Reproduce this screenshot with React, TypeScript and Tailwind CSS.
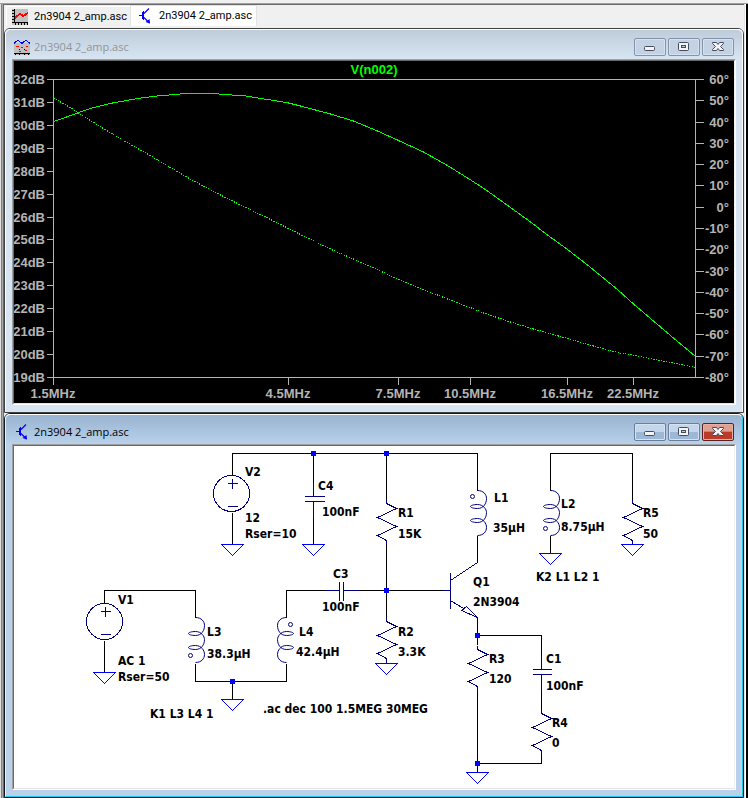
import React from "react";

const TITLE = "2n3904 2_amp.asc";

function TransistorIcon() {
  return (
    <svg viewBox="0 0 16 16" className="size-4 shrink-0" aria-hidden="true">
      <g fill="none" stroke="#0000ff">
        <path d="M2 7.5H6M5.5 4V11M6.5 3V12" shapeRendering="crispEdges" />
        <path d="M7 5.5L12 0.5M7 9.5L12.5 15" strokeWidth="1.2" />
      </g>
      <path d="M8.5 14L13 15.5L12.5 11Z" fill="#0000ff" />
    </svg>
  );
}

function PlotTabIcon() {
  return (
    <svg viewBox="0 0 16 16" className="size-4 shrink-0" aria-hidden="true" shapeRendering="crispEdges">
      <rect width="16" height="16" fill="#c0c0c0" />
      <path d="M2.5 0V14M2 13.5H16M0 1.5H2M0 4.5H2M0 7.5H2M0 10.5H2M0 13.5H2M3.5 14V16M6.5 14V16M9.5 14V16M12.5 14V16M15.5 14V16" stroke="#000" fill="none" />
      <path d="M3 9L8 4.5L11 7L16 4" stroke="#ff0000" strokeWidth="1.8" fill="none" />
    </svg>
  );
}

function PlotWindowIcon() {
  return (
    <svg viewBox="0 0 16 16" className="size-4 shrink-0" aria-hidden="true" shapeRendering="crispEdges">
      <rect y="4" width="16" height="12" fill="#c0c0c0" />
      <path d="M0 4.5L4 1L8 4.5L12 1L16 4.5" stroke="#0000ff" fill="none" />
      <path d="M2 7.5H5M7 8.5H9M12 7.5H14M5 12.5H7M11 11.5H13" stroke="#ff0000" fill="none" />
      <path d="M0 14.5H16M1.5 14V16M5.5 14V16M10.5 14V16M14.5 14V16M5 10.5H6M10 10.5H11" stroke="#000" fill="none" />
    </svg>
  );
}

const glyph = { fill: "#f4f4f4", stroke: "#454a60" };

function CaptionGlyph({ kind }: { kind: "Minimize" | "Maximize" | "Close" }) {
  return (
    <svg viewBox="0 0 12 12" className="size-3 shrink-0" aria-hidden="true">
      {kind === "Minimize" && <rect x="0.5" y="5.5" width="10" height="4" rx="1" {...glyph} />}
      {kind === "Maximize" && (
        <>
          <rect x="0.5" y="1.5" width="10" height="8" rx="1" {...glyph} />
          <rect x="3.5" y="4.5" width="4" height="2" fill="#b9cbdf" stroke="#454a60" />
        </>
      )}
      {kind === "Close" && (
        <path d="M0.5 1.5H4.5L6 3.5L7.5 1.5H11.5V2.5L8.5 5.5L11.5 8.5V9.5H7.5L6 7.5L4.5 9.5H0.5V8.5L3.5 5.5L0.5 2.5Z" {...glyph} />
      )}
    </svg>
  );
}

function CaptionButtons({ active }: { active: boolean }) {
  const idle = active
    ? "border-[#6b7f9c] bg-linear-to-b from-[#c3d6eb] from-50% to-[#9db8d6] to-50%"
    : "border-[#8592ae] bg-[#c4d3e3]";
  const close = active
    ? "border-[#5c1f22] bg-linear-to-b from-[#e0a090] from-45% to-[#b83c28] to-50%"
    : idle;
  return (
    <div className="flex gap-0.5">
      {(["Minimize", "Maximize", "Close"] as const).map((kind) => (
        <button
          key={kind}
          aria-label={kind}
          className={`flex h-[18px] w-8 items-center justify-center rounded-xs border ${
            kind === "Close" ? close : idle
          } ${kind === "Close" && active ? "shadow-[inset_0_0_0_1px_#e8b0a4]" : "shadow-[inset_0_0_0_1px_#d6e2ef]"}`}
        >
          <CaptionGlyph kind={kind} />
        </button>
      ))}
    </div>
  );
}

function MdiWindow({ active, icon, children }: { active: boolean; icon: React.ReactNode; children: React.ReactNode }) {
  return (
    <section className={`rounded-t-md border ${active ? "border-[#101820]" : "border-[#404040]"}`}>
      <div
        className={`rounded-t-[5px] border pb-1.5 ${
          active
            ? "border-t-white border-r-[#20c8e8] border-b-[#20c8e8] border-l-[#e8f1fa] bg-[#b9d1ea]"
            : "border-t-white border-r-white border-b-[#d7e4f2] border-l-white bg-[#d7e4f2]"
        }`}
      >
        <header
          className={`flex h-[29px] items-start justify-between rounded-t-[5px] bg-linear-to-b px-2 pt-2 ${
            active ? "from-[#99b4d1] to-[#b9d1ea] text-black" : "from-[#bfcddb] to-[#d7e4f2] text-[#8f9499]"
          }`}
        >
          <div className="flex h-[18px] items-center gap-1">
            {icon}
            <h2 className="font-['Open_Sans',sans-serif] text-[11px] leading-4">{TITLE}</h2>
          </div>
          <CaptionButtons active={active} />
        </header>
        <div className="mx-1.5 border border-t-[#a0a0a0] border-r-white border-b-white border-l-[#a0a0a0]">
          <div className="border border-t-[#696969] border-r-[#f0f0f0] border-b-[#e3e3e3] border-l-[#696969]">{children}</div>
        </div>
      </div>
    </section>
  );
}

const DB = Array.from({ length: 14 }, (_, i) => 32 - i);
const DEG = Array.from({ length: 15 }, (_, i) => 60 - i * 10);
const FREQ: [string, number][] = [
  ["1.5MHz", 53],
  ["4.5MHz", 288],
  ["7.5MHz", 398],
  ["10.5MHz", 470],
  ["16.5MHz", 567],
  ["22.5MHz", 633],
];
const dbY = (i: number) => 79 + Math.round((i * 298) / 13);
const degY = (i: number) => 79 + Math.round((i * 298) / 14);

const GAIN =
  "53,121 62,118 77,112.5 93,107 112,102.5 137,98 157,95.5 180,93.5 200,93 218,93.5 245,95.5 267,99 288,102.5 300,105.5 330,113.5 353,120.5 377,130.5 398,140 423,151.5 447,165 471,180 487,190.5 510,207 530,221.5 547,234.5 567,249 587,264.5 617,289 633,303.5 650,318 670,335 695,356";
const PHASE =
  "53,97.5 68,106 89,119.5 107,130.5 130,144 148,154 163,163 187,177 213,191 242,205.5 267,217.5 288,228 300,234 333,250 367,264.5 398,279 423,289 447,298.5 471,307.5 483,312.5 510,321.5 533,328.5 567,338 593,345.5 617,352 640,356 670,362 695,367";

function BodePlot() {
  return (
    <svg
      viewBox="14 61 720 342"
      role="img"
      aria-label="Gain and phase of V(n002)"
      className="block h-auto w-full bg-black font-['Liberation_Sans',Arial,sans-serif] text-[13px] font-bold"
    >
      <g transform="translate(0.5 0.5)" shapeRendering="crispEdges" fill="none" stroke="#b4b4b4">
        <path d="M46 79H703M46 377H703M53 79V384M695 79V377" />
        {DB.map((v, i) => (
          <path key={v} d={`M46 ${dbY(i)}H53`} />
        ))}
        {DEG.map((v, i) => (
          <path key={v} d={`M695 ${degY(i)}H703`} />
        ))}
        {FREQ.map(([f, x]) => (
          <path key={f} d={`M${x} 377V384`} />
        ))}
        <polyline points={GAIN} stroke="#00ff00" />
        <polyline points={PHASE} stroke="#00ff00" strokeDasharray="1.3 1.3" />
      </g>
      <text x="374" y="74" textAnchor="middle" fill="#00ff00">
        V(n002)
      </text>
      <g fill="#b4b4b4">
        {DB.map((v, i) => (
          <text key={v} x="45" y={dbY(i) + 5} textAnchor="end">
            {v}dB
          </text>
        ))}
        {DEG.map((v, i) => (
          <text key={v} x="729" y={degY(i) + 5} textAnchor="end">
            {v}°
          </text>
        ))}
        {FREQ.map(([f, x]) => (
          <text key={f} x={x} y="398" textAnchor="middle">
            {f}
          </text>
        ))}
      </g>
    </svg>
  );
}

const WIRES = [
  "M232 475V453H477V490M232 512V544",
  "M313 453V482M313 517V544",
  "M386 453V499M386 544V618",
  "M477 535V562M550 490V453H632V499M550 535V553",
  "M104 603V590H195V617M104 640V672",
  "M195 663V681H286V663M232 681V699",
  "M286 617V590H325M358 590H442",
  "M477 617V644M477 690V772M477 635H541V654M541 690V709M541 754V763H477",
];

const GROUNDS = [
  [232, 544],
  [313, 544],
  [386, 663],
  [550, 553],
  [632, 544],
  [104, 672],
  [232, 699],
  [477, 772],
];
const NODES = [
  [313, 453],
  [386, 453],
  [386, 590],
  [232, 681],
  [477, 635],
  [477, 763],
];
const RESISTORS = [
  [386, 503],
  [386, 621],
  [632, 503],
  [477, 649],
  [541, 713],
];
const SOURCES = [
  [231, 493],
  [104, 621],
];
const COILS = [
  { x: 477, y: 490, flip: false, dot: [472, 496] },
  { x: 550, y: 490, flip: false, dot: [545, 528] },
  { x: 195, y: 617, flip: false, dot: [190, 655] },
  { x: 286, y: 617, flip: true, dot: [290, 624] },
];

const LABELS: [number, number, string][] = [
  [245, 476, "V2"],
  [245, 522, "12"],
  [245, 538, "Rser=10"],
  [318, 490, "C4"],
  [322, 516, "100nF"],
  [398, 517, "R1"],
  [398, 538, "15K"],
  [494, 502, "L1"],
  [493, 532, "35µH"],
  [561, 508, "L2"],
  [561, 531, "8.75µH"],
  [643, 517, "R5"],
  [643, 538, "50"],
  [536, 581, "K2 L1 L2 1"],
  [473, 586, "Q1"],
  [473, 606, "2N3904"],
  [118, 604, "V1"],
  [118, 665, "AC 1"],
  [118, 681, "Rser=50"],
  [207, 636, "L3"],
  [207, 658, "38.3µH"],
  [150, 718, "K1 L3 L4 1"],
  [299, 636, "L4"],
  [296, 656, "42.4µH"],
  [333, 578, "C3"],
  [322, 611, "100nF"],
  [398, 636, "R2"],
  [398, 656, "3.3K"],
  [263, 713, ".ac dec 100 1.5MEG 30MEG"],
  [489, 663, "R3"],
  [489, 683, "120"],
  [546, 663, "C1"],
  [546, 690, "100nF"],
  [552, 727, "R4"],
  [552, 747, "0"],
];

function Schematic() {
  return (
    <svg
      viewBox="14 446 720 342"
      role="img"
      aria-label="Single transistor amplifier schematic"
      className="block h-auto w-full bg-white font-['DejaVu_Sans_Condensed','DejaVu_Sans',sans-serif] text-[12px] font-bold"
    >
      <g transform="translate(0.5 0.5)" shapeRendering="crispEdges" fill="none">
        {WIRES.map((d) => (
          <path key={d} d={d} stroke="#000" />
        ))}
        <g stroke="#000080">
          <path d="M313 482V496M304 496H324M304 501H324M313 501V517" />
          <path d="M541 654V669M532 669H551M532 674H551M541 674V690" />
          <path d="M325 590H339M339 581V600M343 581V600M343 590H358" />
          <path d="M442 590H450M450 572V608M450 580L477 562M450 600L463 608M477 617L466 606L461 610Z" />
          {RESISTORS.map(([x, y]) => (
            <path key={`${x}-${y}`} d={`M${x} ${y - 4}v4l10 5l-19 9l19 9l-19 9l9 5v4`} />
          ))}
          {SOURCES.map(([x, y]) => (
            <g key={x}>
              <circle cx={x} cy={y} r="18" />
              <path d={`M${x - 4} ${y - 10}h10M${x + 1} ${y - 15}v10M${x - 4} ${y + 13}h10`} />
            </g>
          ))}
          {COILS.map(({ x, y, flip, dot }) => (
            <g key={x} shapeRendering="geometricPrecision">
              <path
                transform={`translate(${x} ${y})${flip ? " scale(-1 1)" : ""}`}
                d="M0 0C6 0 9 4 9 8C9 13 6 18 0 18C-4 18 -7 17 -7 16C-7 15 -4 14 0 14C6 14 9 19 9 22C9 27 6 32 0 32C-4 32 -7 31 -7 30C-7 29 -4 28 0 28C6 28 9 33 9 37C9 41 6 45 0 45"
              />
              <circle cx={dot[0]} cy={dot[1]} r="2" />
            </g>
          ))}
        </g>
        {GROUNDS.map(([x, y]) => (
          <path key={`${x}-${y}`} d={`M${x - 11} ${y}h22l-11 11z`} stroke="#0000ff" />
        ))}
      </g>
      {NODES.map(([x, y]) => (
        <rect key={`${x}-${y}`} x={x - 2} y={y - 2} width="5" height="5" fill="#0000ff" />
      ))}
      {LABELS.map(([x, y, label]) => (
        <text key={`${x}-${y}`} x={x} y={y} fill="#000">
          {label}
        </text>
      ))}
    </svg>
  );
}

export default function App() {
  return (
    <div className="min-h-screen bg-[#f0f0f0] pt-[3px]">
      <div className="flex border-t border-[#a0a0a0]">
        <div className="w-px bg-[#e3e3e3]" />
        <div className="w-px bg-[#808080]" />
        <div className="w-px bg-[#a8a8a8]" />
        <div className="w-px bg-[#696969]" />
        <main className="min-w-0 grow border-t border-[#696969]">
          <nav role="tablist" className="flex h-[23px] items-start pl-0.5 font-[Roboto,sans-serif] text-[11px] leading-4">
            <button role="tab" aria-selected="false" className="mt-px flex h-5 items-center gap-1.5 border-t border-l border-white bg-[#f0f0f0] pt-px pr-[3px] pl-[5px]">
              <PlotTabIcon />
              {TITLE}
            </button>
            <button role="tab" aria-selected="true" className="flex h-[21px] items-center gap-1.5 border border-b-0 border-[#e3e3e3] bg-white pr-1 pl-1.5">
              <TransistorIcon />
              {TITLE}
            </button>
          </nav>
          <MdiWindow active={false} icon={<PlotWindowIcon />}>
            <BodePlot />
          </MdiWindow>
          <MdiWindow active icon={<TransistorIcon />}>
            <Schematic />
          </MdiWindow>
        </main>
        <div className="w-px bg-[#e3e3e3]" />
        <div className="w-px bg-white" />
        <div className="w-0.5 bg-black" />
      </div>
    </div>
  );
}
